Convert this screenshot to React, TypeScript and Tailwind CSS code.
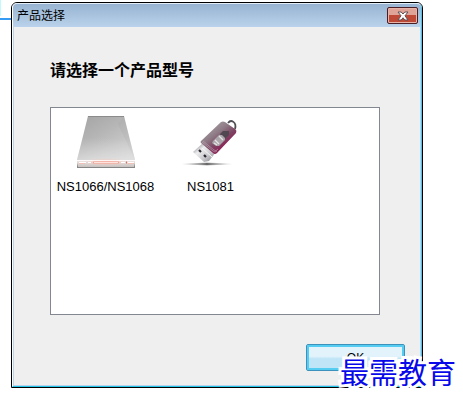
import { useState } from "react";
import type { ReactNode } from "react";

type Product = {
  id: string;
  name: string;
  icon: ReactNode;
};

const DriveIcon = () => (
  <svg width="64" height="56" viewBox="0 0 64 56" aria-hidden="true">
    <defs>
      <linearGradient id="driveTop" x1="0" y1="0" x2="0.8" y2="1">
        <stop offset="0" stopColor="#a2a2a2" />
        <stop offset="0.45" stopColor="#b6b6b6" />
        <stop offset="0.75" stopColor="#c6c6c6" />
        <stop offset="1" stopColor="#cfcfcf" />
      </linearGradient>
      <linearGradient id="driveFade" x1="0" y1="0" x2="0" y2="1">
        <stop offset="0.5" stopColor="#fff" stopOpacity="0" />
        <stop offset="1" stopColor="#fff" stopOpacity="0.35" />
      </linearGradient>
      <linearGradient id="driveFront" x1="0" y1="0" x2="0" y2="1">
        <stop offset="0" stopColor="#f3e9e6" />
        <stop offset="1" stopColor="#c6c1bf" />
      </linearGradient>
      <radialGradient id="driveGlow">
        <stop offset="0" stopColor="#ffb5a6" stopOpacity="0.8" />
        <stop offset="1" stopColor="#ffc9be" stopOpacity="0" />
      </radialGradient>
    </defs>
    <path d="M14 2h36l11 44H3z" fill="url(#driveTop)" />
    <path d="m50 2 11 44-17-36z" fill="#999" opacity="0.15" />
    <path d="M14 2h36l11 44H3z" fill="url(#driveFade)" />
    <path d="M14 2.5h36" stroke="#8b8b8b" />
    <path d="M3 46h58v7H3z" fill="url(#driveFront)" />
    <ellipse cx="32" cy="48" rx="23" ry="4" fill="url(#driveGlow)" />
    <path d="M3 46.5h58" stroke="#fff" strokeOpacity="0.8" />
    <path d="M3 49v5h58v-5l-1 4H4z" fill="#858585" />
    <path d="M19 48.5h26" stroke="#f5a292" strokeWidth="2" />
    <path d="M20 48.5h24" stroke="#fff3f0" strokeWidth="0.8" />
    <path d="M5 48.5h7M14 48.5h3M47 48.5h4M54 48.5h6" stroke="#fff" />
    <path d="M5 49.5h6M54 49.5h6" stroke="#f8b6aa" strokeWidth="0.7" />
    <path d="M52.5 47.5v2" stroke="#d66f60" />
  </svg>
);

const UsbIcon = () => (
  <svg width="64" height="56" viewBox="0 0 64 56" aria-hidden="true">
    <defs>
      <linearGradient id="usbBody" x1="0.2" y1="0.1" x2="0.8" y2="0.8">
        <stop offset="0" stopColor="#aaa3a7" />
        <stop offset="0.4" stopColor="#8d7984" />
        <stop offset="0.65" stopColor="#7d4764" />
        <stop offset="0.9" stopColor="#8d1f55" />
      </linearGradient>
      <linearGradient id="usbPlug" x1="0" y1="0" x2="1" y2="1">
        <stop offset="0.1" stopColor="#8e8e93" />
        <stop offset="0.35" stopColor="#eeeef0" />
        <stop offset="0.65" stopColor="#c8c8cc" />
        <stop offset="1" stopColor="#77777d" />
      </linearGradient>
      <linearGradient id="usbShadow">
        <stop offset="0" stopColor="#aaa" stopOpacity="0" />
        <stop offset="0.5" stopColor="#666" />
        <stop offset="1" stopColor="#aaa" stopOpacity="0" />
      </linearGradient>
    </defs>
    <ellipse cx="28" cy="50" rx="26" ry="1.2" fill="url(#usbShadow)" />
    <path d="M49 9c3-4 9-1 7 6" fill="none" stroke="#4f4e55" strokeWidth="1.8" />
    <path d="m24 29-10 9 11 10 5-1 7-9z" fill="url(#usbPlug)" />
    <path d="m20 36 2 2M25 41l2 2" stroke="#28282d" strokeWidth="2.2" />
    <path d="m23 34 10 9" stroke="#f6f6f6" strokeWidth="1" />
    <path
      d="M22 27 42 8q2-1 4 0l10 7q2 1 1 4L38 39q-2 2-4 0L22 29q-1-1 0-2Z"
      fill="url(#usbBody)"
    />
    <path d="m24 27 11 9q2 2 4-1M23 28l11 9q2 2 4 0" stroke="#c0aab7" strokeWidth="0.6" fill="none" />
    <path d="m41 20 3-3h6v4l-5 5z" fill="#514750" />
    <path d="m34 27 6-6h3l3 3v2l-6 6h-3l-4-3z" fill="#aaa6a9" />
    <path d="m36 26 4 4M35 29l3 2M40 22l4 4" stroke="#e6e3e6" strokeWidth="1.3" />
  </svg>
);

const products: Product[] = [
  { id: "ns1066", name: "NS1066/NS1068", icon: <DriveIcon /> },
  { id: "ns1081", name: "NS1081", icon: <UsbIcon /> },
];

const CloseIcon = () => (
  <svg width="12" height="10" viewBox="0 0 12 10" aria-hidden="true">
    <path
      d="M1 1h3.2L6 3l1.8-2H11L8 4.8 11 9H7.8L6 6.8 4.2 9H1l3-4.2Z"
      fill="#fff"
      stroke="#5e5054"
      strokeWidth="1"
    />
  </svg>
);

export default function App() {
  const [open, setOpen] = useState(true);
  const [selected, setSelected] = useState<string | null>(null);

  return (
    <main className="flex min-h-screen items-start bg-white font-['Liberation_Sans','Noto_Sans_CJK_SC',sans-serif] text-black">
      <div className="w-[11px] shrink-0">
        <div className="mr-2.5 h-4 bg-[#bffaff]" />
        <div className="mt-0.5 h-0.5 bg-[#359cf5]" />
      </div>
      {open && (
        <section
          role="dialog"
          aria-labelledby="dialog-title"
          className="relative mt-0.5 mr-10 min-w-0 flex-1 rounded-t-md border border-black bg-[#efefef]"
        >
          <div className="rounded-t-[5px] border border-t-[#e2edf8] border-r-[#4bc5ed] border-b-[#20c5e8] border-l-white">
            <header className="flex h-[23px] items-center justify-between rounded-t bg-linear-to-b from-[#98b4d2] to-[#bad2eb] pr-[3px] pl-1">
              <h1 id="dialog-title" className="text-xs leading-4">
                产品选择
              </h1>
              <button
                aria-label="关闭"
                onClick={() => setOpen(false)}
                className="flex h-[17px] w-[31px] items-center justify-center rounded-xs border border-[#4b1d25] bg-linear-to-b from-[#e0a397] from-45% to-[#bd4936] to-50% inset-ring inset-ring-[#e8b4aa]"
              >
                <CloseIcon />
              </button>
            </header>
            <div className="border-x border-b border-[#bad2eb] pt-8 pr-[15px] pb-3.5 pl-9">
              <h2 className="text-base leading-6 font-bold">请选择一个产品型号</h2>
              <div className="mt-6 mr-[25px] flex h-[208px] items-start gap-1 border border-[#828790] bg-white px-1 pt-1.5">
                {products.map((product) => (
                  <button
                    key={product.id}
                    aria-pressed={selected === product.id}
                    onClick={() => setSelected(product.id)}
                    className="flex w-[101px] flex-col items-center aria-pressed:bg-[#d5e9fb]"
                  >
                    {product.icon}
                    <span className="mt-[9px] text-[13px] leading-4">{product.name}</span>
                  </button>
                ))}
              </div>
              <div className="mt-[29px] flex justify-end">
                <button
                  onClick={() => setOpen(false)}
                  className="h-[27px] w-[99px] rounded-xs border border-[#3c92ba] bg-linear-to-b from-[#e3f3fb] from-45% to-[#c0e5f6] to-55% text-xs inset-ring-2 inset-ring-[#55cdf2]"
                >
                  OK
                </button>
              </div>
            </div>
          </div>
          {/* Watermark */}
          <p className="pointer-events-none absolute -right-[34px] bottom-0 font-['Noto_Sans_CJK_SC',sans-serif] text-[29px] leading-8 whitespace-nowrap text-[#0808e8] [-webkit-text-stroke:6px_white] [paint-order:stroke_fill]">
            最需教育
          </p>
        </section>
      )}
    </main>
  );
}
